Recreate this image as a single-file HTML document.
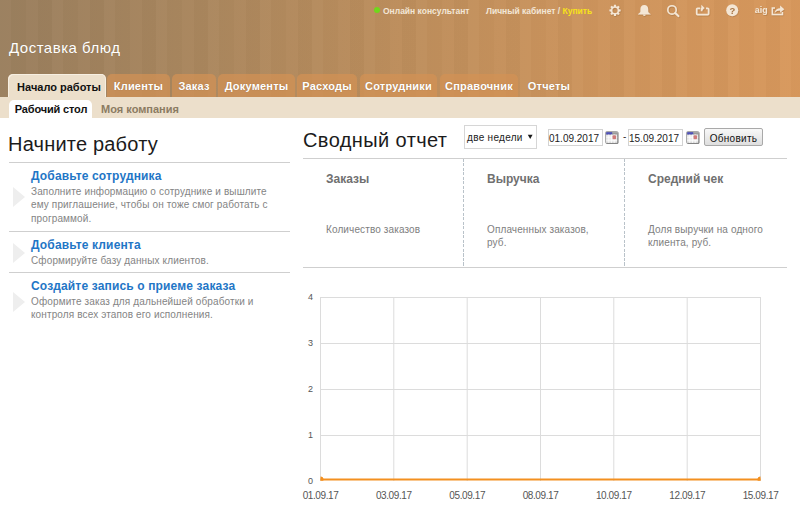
<!DOCTYPE html>
<html><head><meta charset="utf-8">
<style>
*{margin:0;padding:0;box-sizing:border-box}
html,body{width:800px;height:512px;overflow:hidden;background:#fff;font-family:"Liberation Sans",sans-serif;position:relative}
.abs{position:absolute}
#hdr{left:0;top:0;width:800px;height:97px;
 background:
  repeating-linear-gradient(90deg, rgba(255,255,255,0.02) 0 11px, rgba(0,0,0,0.012) 11px 26px, rgba(255,255,255,0.012) 26px 38px, rgba(0,0,0,0.02) 38px 52px),
  linear-gradient(90deg,#9a7f5e 0%,#aa875e 25%,#bd8e5c 50%,#cd945c 75%,#d8985c 100%);}
.top{font-size:8.5px;font-weight:bold;color:#f3e6d6;white-space:nowrap;line-height:10px}
#title{left:9px;top:39px;font-size:15px;letter-spacing:.5px;color:#fff;white-space:nowrap;text-shadow:0 0 1px rgba(0,0,0,.15)}
.tab{top:74px;height:23px;border-radius:5px 5px 0 0;background:rgba(210,145,84,.72);color:#fff;font-weight:bold;font-size:11px;line-height:22px;padding-top:1px;text-align:center;letter-spacing:.2px;white-space:nowrap;text-shadow:0 0 1px rgba(0,0,0,.25)}
.tab.act{top:74px;height:23px;padding-top:2px;background:#ecdfcb;color:#111;text-shadow:none;padding-left:4px;letter-spacing:0;box-shadow:inset 1px 1px 0 rgba(255,250,240,.6),inset -1px 0 0 rgba(255,250,240,.6)}
#sub{left:0;top:97px;width:800px;height:21px;background:#ecdfcb}
.stab{top:100px;height:18px;border-radius:5px 5px 0 0;font-weight:bold;font-size:11px;line-height:17px;padding-top:1px;white-space:nowrap;text-align:center}
h1{position:absolute;font-weight:normal;font-size:20px;letter-spacing:.3px;color:#1b1b1b;white-space:nowrap;line-height:20px}
.hr{height:1px;background:#cfcfcf}
.it{font-weight:bold;font-size:12px;letter-spacing:.15px;color:#1f76c6;white-space:nowrap;line-height:14px}
.ds{font-size:10px;color:#848484;line-height:13.7px;letter-spacing:.13px;white-space:nowrap}
.tri{width:0;height:0;border-top:10px solid transparent;border-bottom:10px solid transparent;border-left:12px solid #eeeeee}
.ch{font-weight:bold;font-size:12px;color:#707070;white-space:nowrap;line-height:14px}
.cd{font-size:10px;color:#7e7e7e;line-height:13px;letter-spacing:.12px;white-space:nowrap}
.dash{width:1px;background:repeating-linear-gradient(180deg,#b9c2c9 0 3px,transparent 3px 4.5px)}
.yl{font-size:9px;color:#555;width:12px;text-align:right;line-height:10px}
.xl{font-size:10px;letter-spacing:-.4px;color:#555;width:50px;text-align:center;line-height:10px}
.inp{border:1px solid #d3d3d3;background:#fff;font-size:10px;color:#222;line-height:15px;padding-left:0;padding-top:.5px;white-space:nowrap}
</style></head><body>
<div id="hdr" class="abs"></div>

<!-- top bar -->
<div class="abs" style="left:374px;top:7px;width:6px;height:6px;border-radius:50%;background:#6fd81c"></div>
<div class="abs top" style="left:383px;top:5.7px">Онлайн консультант</div>
<div class="abs top" style="left:486px;top:5.7px">Личный кабинет / <span style="color:#f7e21a">Купить</span></div>

<!-- icons -->
<svg class="abs" style="left:600px;top:0" width="200" height="25" viewBox="600 0 200 25">
 <defs><filter id="sh" x="-20%" y="-20%" width="150%" height="150%"><feDropShadow dx="0.5" dy="0.7" stdDeviation="0.4" flood-color="#6b4218" flood-opacity="0.35"/></filter></defs>
 <g fill="#f4e6d4" filter="url(#sh)">
  <path fill-rule="evenodd" d="M613.75,6.50 L614.04,4.78 L615.96,4.78 L616.25,6.50 L616.88,6.75 L618.29,5.75 L619.65,7.11 L618.65,8.52 L618.90,9.15 L620.62,9.44 L620.62,11.36 L618.90,11.65 L618.65,12.28 L619.65,13.69 L618.29,15.05 L616.88,14.05 L616.25,14.30 L615.96,16.02 L614.04,16.02 L613.75,14.30 L613.12,14.05 L611.71,15.05 L610.35,13.69 L611.35,12.28 L611.10,11.65 L609.38,11.36 L609.38,9.44 L611.10,9.15 L611.35,8.52 L610.35,7.11 L611.71,5.75 L613.12,6.75 Z M612.40,10.40 a2.60,2.60 0 1,0 5.20,0 a2.60,2.60 0 1,0 -5.20,0 Z"/>
  <path d="M644.3,5 c-2.6,0 -3.9,1.8 -3.9,4.2 v2.2 c0,0.9 -1.2,1.9 -2.4,2.6 v0.6 h12.6 v-0.6 c-1.2,-0.7 -2.4,-1.7 -2.4,-2.6 v-2.2 c0,-2.4 -1.3,-4.2 -3.9,-4.2 z"/>
  <path d="M642.9,14.6 h2.8 a1.4,1.4 0 0 1 -2.8,0 z"/>
  <circle cx="672" cy="9.9" r="4.2" fill="none" stroke="#f4e6d4" stroke-width="1.6"/>
  <path d="M675.2,13.1 l3.2,3" stroke="#f4e6d4" stroke-width="2" stroke-linecap="round" fill="none"/>
  <path d="M700.2,8.3 H697.6 a0.9,0.9 0 0 0 -0.9,0.9 V13.8 a0.9,0.9 0 0 0 0.9,0.9 H707.7 a0.9,0.9 0 0 0 0.9,-0.9 V9.2 a0.9,0.9 0 0 0 -0.9,-0.9 H706" fill="none" stroke="#f4e6d4" stroke-width="1.7"/>
  <path d="M701.3,4.8 L704.6,8 L701.3,11.2 Z"/>
  <path d="M701.6,8 v3.2" stroke="#f4e6d4" stroke-width="1.6" fill="none"/>
  <circle cx="732.2" cy="10.3" r="6"/>
  <text x="732.3" y="13.8" font-family="Liberation Sans" font-weight="bold" font-size="9.5" text-anchor="middle" fill="#a87544">?</text>
  <text x="754.8" y="13.2" font-family="Liberation Sans" font-weight="bold" font-size="8.8" fill="#f4e6d4">aig</text>
  <path d="M775,7.9 H772.3 V14.5 H782.4 V12" fill="none" stroke="#f4e6d4" stroke-width="1.5"/>
  <path d="M774.5,13 c0.5,-3 2.8,-4.8 5.6,-4.8 v-2.6 l4.2,3.6 l-4.2,3.6 v-2.3 c-2.3,0 -4.1,0.8 -5.6,2.5 z"/>
 </g>
</svg>

<div id="title" class="abs">Доставка блюд</div>

<!-- tabs -->
<div class="abs tab act" style="left:8px;width:98px">Начало работы</div>
<div class="abs tab" style="left:107px;width:63px">Клиенты</div>
<div class="abs tab" style="left:172px;width:44px">Заказ</div>
<div class="abs tab" style="left:218px;width:77px">Документы</div>
<div class="abs tab" style="left:297px;width:60px">Расходы</div>
<div class="abs tab" style="left:360px;width:77px">Сотрудники</div>
<div class="abs tab" style="left:440px;width:78px">Справочник</div>
<div class="abs tab" style="left:519px;width:60px;background:transparent">Отчеты</div>

<div id="sub" class="abs"></div>
<div class="abs stab" style="left:9px;width:83px;background:#fff;color:#111;padding-left:1px;letter-spacing:-.15px">Рабочий стол</div>
<div class="abs stab" style="left:92px;width:96px;color:#8b7b62">Моя компания</div>

<!-- left -->
<h1 style="left:8px;top:133.5px;letter-spacing:.2px">Начните работу</h1>
<div class="abs hr" style="left:9px;top:162px;width:281px"></div>

<div class="abs tri" style="left:13px;top:187px"></div>
<div class="abs it" style="left:31px;top:169px">Добавьте сотрудника</div>
<div class="abs ds" style="left:31px;top:184.5px">Заполните информацию о сотруднике и вышлите<br>ему приглашение, чтобы он тоже смог работать с<br>программой.</div>
<div class="abs hr" style="left:9px;top:231px;width:281px"></div>

<div class="abs tri" style="left:13px;top:243px"></div>
<div class="abs it" style="left:31px;top:238px">Добавьте клиента</div>
<div class="abs ds" style="left:31px;top:253.5px">Сформируйте базу данных клиентов.</div>
<div class="abs hr" style="left:9px;top:272px;width:281px"></div>

<div class="abs tri" style="left:13px;top:292px"></div>
<div class="abs it" style="left:31px;top:279px">Создайте запись о приеме заказа</div>
<div class="abs ds" style="left:31px;top:294.5px">Оформите заказ для дальнейшей обработки и<br>контроля всех этапов его исполнения.</div>

<!-- right -->
<h1 style="left:303px;top:130px;letter-spacing:.4px">Сводный отчет</h1>
<div class="abs" style="left:464px;top:125px;width:73px;height:24px;border:1px solid #d6d6d6;background:#fff"></div>
<div class="abs" style="left:467px;top:131.5px;font-size:10px;letter-spacing:.3px;color:#222;white-space:nowrap;line-height:12px">две недели</div>
<svg class="abs" style="left:527px;top:134px" width="7" height="6" viewBox="0 0 7 6"><path d="M0.8 0.8H5.6L3.2 5Z" fill="#1a1a1a"/></svg>

<div class="abs inp" style="left:548px;top:129px;width:55px;height:17px">01.09.2017</div>
<svg class="abs" style="left:605px;top:131px" width="14" height="13" viewBox="0 0 14 13">
 <rect x="0.6" y="0.6" width="12.3" height="11.8" rx="1" fill="#e9e9e9" stroke="#a3a3a3" stroke-width="1"/>
 <path d="M12.9 1.5v10.9M1.5 12.4h11.4" stroke="#7a7a7a" stroke-width="0.9"/>
 <rect x="1.2" y="1.2" width="11" height="2.3" fill="#9a9a9a"/>
 <rect x="1.2" y="1.2" width="6" height="2.3" fill="#4d4fb8"/>
 <path d="M1.2 6.2h11M1.2 9.2h11M3.8 3.5v8.5M6.4 3.5v8.5M9.2 3.5v8.5" stroke="#fff" stroke-width="0.8"/>
 <rect x="7.5" y="4.2" width="3.6" height="4" rx="1.2" fill="#cf7b7b"/>
</svg>
<div class="abs" style="left:623px;top:130.5px;font-size:10px;color:#333;line-height:12px">-</div>
<div class="abs inp" style="left:628px;top:129px;width:55px;height:17px">15.09.2017</div>
<svg class="abs" style="left:686px;top:131px" width="14" height="13" viewBox="0 0 14 13">
 <rect x="0.6" y="0.6" width="12.3" height="11.8" rx="1" fill="#e9e9e9" stroke="#a3a3a3" stroke-width="1"/>
 <path d="M12.9 1.5v10.9M1.5 12.4h11.4" stroke="#7a7a7a" stroke-width="0.9"/>
 <rect x="1.2" y="1.2" width="11" height="2.3" fill="#9a9a9a"/>
 <rect x="1.2" y="1.2" width="6" height="2.3" fill="#4d4fb8"/>
 <path d="M1.2 6.2h11M1.2 9.2h11M3.8 3.5v8.5M6.4 3.5v8.5M9.2 3.5v8.5" stroke="#fff" stroke-width="0.8"/>
 <rect x="7.5" y="4.2" width="3.6" height="4" rx="1.2" fill="#cf7b7b"/>
</svg>
<div class="abs" style="left:704px;top:128px;width:59px;height:18px;border:1px solid #a9a9a9;border-radius:2px;background:linear-gradient(#f8f8f8,#dedede);font-size:10px;color:#111;line-height:16px;padding-top:1.5px;letter-spacing:.3px;text-align:center">Обновить</div>

<div class="abs hr" style="left:303px;top:158px;width:484px"></div>
<div class="abs dash" style="left:463px;top:159px;height:109px"></div>
<div class="abs dash" style="left:624px;top:159px;height:109px"></div>
<div class="abs hr" style="left:303px;top:267px;width:484px"></div>

<div class="abs ch" style="left:326px;top:172px">Заказы</div>
<div class="abs ch" style="left:487px;top:172px">Выручка</div>
<div class="abs ch" style="left:648px;top:172px">Средний чек</div>
<div class="abs cd" style="left:326px;top:222.7px">Количество заказов</div>
<div class="abs cd" style="left:487px;top:222.7px">Оплаченных заказов,<br>руб.</div>
<div class="abs cd" style="left:648px;top:222.7px">Доля выручки на одного<br>клиента, руб.</div>

<!-- chart -->
<svg class="abs" style="left:0;top:0" width="800" height="512">
 <g stroke="#dcdcdc" stroke-width="1" fill="none">
  <path d="M320.5 297V481 M393.8 297V481 M467.2 297V481 M540.5 297V481 M613.8 297V481 M687.2 297V481 M760.5 297V481"/>
  <path d="M320 297.5H761 M320 343.5H761 M320 389.5H761 M320 435.5H761"/>
 </g>
 <path d="M320.5 479.5H760.5" stroke="#f39020" stroke-width="2.1" fill="none"/>
 <clipPath id="pc"><rect x="320.5" y="290" width="440" height="190.7"/></clipPath>
 <g clip-path="url(#pc)"><circle cx="320.5" cy="479.5" r="3" fill="#f39020"/>
 <circle cx="760.5" cy="479.5" r="3" fill="#f39020"/></g>
</svg>
<div class="abs yl" style="left:301px;top:291.5px">4</div>
<div class="abs yl" style="left:301px;top:337.5px">3</div>
<div class="abs yl" style="left:301px;top:383.5px">2</div>
<div class="abs yl" style="left:301px;top:429.5px">1</div>
<div class="abs yl" style="left:301px;top:475.5px">0</div>
<div class="abs xl" style="left:295.5px;top:490.5px">01.09.17</div>
<div class="abs xl" style="left:368.8px;top:490.5px">03.09.17</div>
<div class="abs xl" style="left:442.2px;top:490.5px">05.09.17</div>
<div class="abs xl" style="left:515.5px;top:490.5px">08.09.17</div>
<div class="abs xl" style="left:588.8px;top:490.5px">10.09.17</div>
<div class="abs xl" style="left:662.2px;top:490.5px">12.09.17</div>
<div class="abs xl" style="left:735.5px;top:490.5px">15.09.17</div>
</body></html>
